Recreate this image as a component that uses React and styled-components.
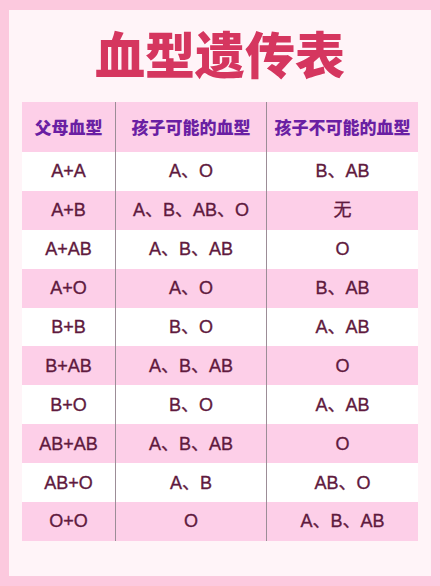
import React from "react";
import styled, { createGlobalStyle } from "styled-components";

const rows = [
    ["A+A", "A、O", "B、AB"],
    ["A+B", "A、B、AB、O", "无"],
    ["A+AB", "A、B、AB", "O"],
    ["A+O", "A、O", "B、AB"],
    ["B+B", "B、O", "A、AB"],
    ["B+AB", "A、B、AB", "O"],
    ["B+O", "B、O", "A、AB"],
    ["AB+AB", "A、B、AB", "O"],
    ["AB+O", "A、B", "AB、O"],
    ["O+O", "O", "A、B、AB"],
];

const heads = ["父母血型", "孩子可能的血型", "孩子不可能的血型"];

export default function App() {
    return (
        <>
            <GlobalStyle />
            <Page>
                <Card>
                    <Title>血型遗传表</Title>
                    <Table>
                        <Row $head>
                            {heads.map((h, i) => (
                                <HeadCell key={i} $col={i}>{h}</HeadCell>
                            ))}
                        </Row>
                        {rows.map((r, ri) => (
                            <Row key={ri} $pink={ri % 2 === 1}>
                                {r.map((c, ci) => (
                                    <Cell key={ci} $col={ci}>{c}</Cell>
                                ))}
                            </Row>
                        ))}
                    </Table>
                </Card>
            </Page>
        </>
    );
}

const GlobalStyle = createGlobalStyle`
    html, body {
        margin: 0;
        padding: 0;
        background: #fcc9de;
    }
    * {
        box-sizing: border-box;
    }
`;

const Page = styled.div`
    width: 440px;
    height: 586px;
    padding: 10px 9px 10px 9px;
    background: #fcc9de;
`;

const Card = styled.div`
    width: 422px;
    height: 566px;
    background: #fff4f8;
    padding: 0 13px;
    display: flex;
    flex-direction: column;
`;

const Title = styled.h1`
    margin: 0;
    height: 92px;
    display: flex;
    align-items: center;
    justify-content: center;
    padding-bottom: 8px;
    font-family: "Noto Sans CJK SC", sans-serif;
    font-weight: 900;
    font-size: 50px;
    line-height: 1;
    color: #d5365f;
`;

const Table = styled.div`
    display: flex;
    flex-direction: column;
`;

const Row = styled.div`
    display: grid;
    grid-template-columns: 93px 151px 152px;
    height: ${(p) => (p.$head ? "50px" : "38.9px")};
    background: ${(p) => (p.$head || p.$pink ? "#fdcfe8" : "#ffffff")};
`;

const HeadCell = styled.div`
    display: flex;
    align-items: center;
    justify-content: center;
    font-family: "Noto Sans CJK SC", sans-serif;
    font-weight: 900;
    font-size: 17px;
    line-height: 20px;
    color: #6a1fa3;
    border-left: ${(p) => (p.$col > 0 ? "1.5px solid #9c8d97" : "none")};
`;

const Cell = styled.div`
    display: flex;
    align-items: center;
    justify-content: center;
    font-family: "Liberation Sans", "Noto Sans CJK SC", sans-serif;
    font-size: 18px;
    line-height: 20px;
    color: #5f1a3e;
    -webkit-text-stroke: 0.35px #5f1a3e;
    border-left: ${(p) => (p.$col > 0 ? "1.5px solid #9c8d97" : "none")};
`;
